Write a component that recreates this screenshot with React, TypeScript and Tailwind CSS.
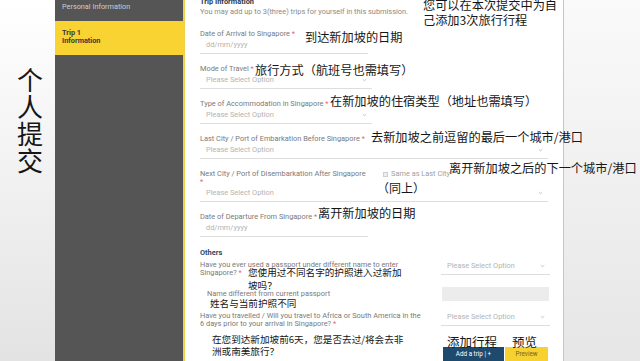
import React from "react";

function Chevron() {
  return (
    <svg width="5" height="4" viewBox="0 0 5 4" className="shrink-0">
      <path d="M0.8 1.2 L2.5 2.8 L4.2 1.2" fill="none" stroke="#b5b5b5" strokeWidth="0.8" />
    </svg>
  );
}

type FieldProps = {
  label: React.ReactNode;
  value: string;
  width: string;
  arrow?: boolean;
  className?: string;
};

function Field({ label, value, width, arrow, className }: FieldProps) {
  return (
    <div className={className}>
      <div className="whitespace-nowrap text-[7.4px] leading-[8px] text-[#7a7a7a]">{label}</div>
      <Picker value={value} width={width} arrow={arrow} />
    </div>
  );
}

function Picker({ value, width, arrow, className }: { value: string; width: string; arrow?: boolean; className?: string }) {
  return (
    <div
      className={`flex items-center justify-between border-b border-[#dedede] pb-[4px] pl-[6px] pr-[5px] pt-[3px] text-[7.4px] leading-[8px] text-[#b3b3b3] ${width} ${className ?? ""}`}
    >
      <span>{value}</span>
      {arrow && <Chevron />}
    </div>
  );
}

const Star = () => <span className="text-[#e0676b]">*</span>;

export default function App() {
  return (
    <div className="relative flex h-[361px] w-[640px] overflow-hidden bg-white font-['Roboto','Liberation_Sans',sans-serif]">
      {/* slide strip with vertical title */}
      <div className="w-[55px] shrink-0 bg-gradient-to-b from-white to-[#e3e3e3] pl-[17px] pt-[65px]">
        <div className="flex flex-col font-['Noto_Sans_CJK_SC',sans-serif] text-[26px] leading-[27px] text-[#161616]">
          <span>个</span>
          <span>人</span>
          <span>提</span>
          <span>交</span>
        </div>
      </div>

      {/* steps sidebar */}
      <aside className="w-[130px] shrink-0 border-r-2 border-[#eed349] bg-[#555555]">
        <div className="h-[20px] whitespace-nowrap pl-[7px] pt-[3px] text-[7.3px] leading-[8px] text-[#cdcdcd]">Personal Information</div>
        <div className="mt-[1px] h-[34px] bg-[#f8d331] pl-[7px] pt-[8px] text-[7.3px] font-bold leading-[8px] text-[#3a3a3a]">
          Trip 1
          <br />
          Information
        </div>
      </aside>

      {/* form */}
      <main className="w-[378px] shrink-0 pl-[15px]">
        <div className="-mt-[2px] text-[7.4px] font-bold leading-[8px] text-[#2f3b48]">Trip Information</div>
        <div className="mt-[2px] whitespace-nowrap text-[7.4px] leading-[8px] text-[#8a8a8a]">
          You may add up to 3(three) trips for yourself in this submission.
        </div>

        <Field
          className="mt-[14px]"
          label={<>Date of Arrival to Singapore <Star /></>}
          value="dd/mm/yyyy"
          width="w-[168px]"
        />
        <Field
          className="mt-[11px]"
          label={<>Mode of Travel <Star /></>}
          value="Please Select Option"
          width="w-[172px]"
          arrow
        />
        <Field
          className="mt-[11px]"
          label={<>Type of Accommodation in Singapore <Star /></>}
          value="Please Select Option"
          width="w-[172px]"
          arrow
        />
        <Field
          className="mt-[11px]"
          label={<>Last City / Port of Embarkation Before Singapore <Star /></>}
          value="Please Select Option"
          width="w-[348px]"
          arrow
        />

        <div className="mt-[11px]">
          <div className="flex items-start">
            <div className="w-[183px] whitespace-nowrap text-[7.4px] leading-[8px] text-[#7a7a7a]">
              Next City / Port of Disembarkation After Singapore
              <br />
              <Star />
            </div>
            <div className="flex items-center gap-[3px] whitespace-nowrap text-[7.4px] leading-[8px] text-[#a0a0a0]">
              <span className="h-[5px] w-[5px] border border-[#cfcfcf] bg-[#eeeeee]" />
              Same as Last City
            </div>
          </div>
          <Picker value="Please Select Option" width="w-[348px]" arrow />
        </div>

        <Field
          className="mt-[11px]"
          label={<>Date of Departure From Singapore <Star /></>}
          value="dd/mm/yyyy"
          width="w-[168px]"
        />

        <div className="mt-[12px] text-[7.4px] font-bold leading-[8px] text-[#2d4866]">Others</div>

        <div className="mt-[4px] flex items-start">
          <div className="w-[241px] whitespace-nowrap text-[7.4px] leading-[8px] text-[#7a7a7a]">
            Have you ever used a passport under different name to enter
            <br />
            Singapore? <Star />
          </div>
          <Picker className="-mt-[2px]" value="Please Select Option" width="w-[109px]" arrow />
        </div>

        <div className="mt-[10px] flex items-center">
          <div className="w-[242px] whitespace-nowrap pl-[7px] text-[7.4px] leading-[8px] text-[#7a7a7a]">Name different from current passport</div>
          <div className="h-[14px] w-[107px] bg-[#ececec]" />
        </div>

        <div className="mt-[11px] flex items-start">
          <div className="w-[241px] whitespace-nowrap text-[7.4px] leading-[8px] text-[#7a7a7a]">
            Have you travelled / Will you travel to Africa or South America in the
            <br />
            6 days prior to your arrival in Singapore? <Star />
          </div>
          <Picker className="-mt-[2px]" value="Please Select Option" width="w-[109px]" arrow />
        </div>

        <div className="ml-[243px] mt-[19px] flex gap-[1px] text-[6.3px]">
          <div className="flex h-[16px] w-[61px] items-start justify-center whitespace-nowrap bg-[#1e4b6d] pt-[3px] text-white">Add a trip | +</div>
          <div className="flex h-[16px] w-[43px] items-start justify-center bg-[#f6d12f] pt-[3px] text-[#6f6130]">Preview</div>
        </div>
      </main>

      <div className="flex-1 border-l border-[#c6c6c6] bg-gradient-to-b from-[#fafafa] to-[#e6e6e6]" />

      {/* annotations laid over the form */}
      <div className="pointer-events-none absolute inset-0 font-['Noto_Sans_CJK_SC',sans-serif] text-[#161616]">
        <div className="absolute left-[423px] top-[-2px] whitespace-nowrap text-[12.2px] leading-[15px]">
          您可以在本次提交中为自
          <br />
          己添加3次旅行行程
        </div>
        <div className="absolute left-[305px] top-[30px] whitespace-nowrap text-[12.2px] leading-[15px]">到达新加坡的日期</div>
        <div className="absolute left-[255px] top-[63px] whitespace-nowrap text-[12.2px] leading-[15px]">旅行方式（航班号也需填写）</div>
        <div className="absolute left-[330px] top-[94px] whitespace-nowrap text-[12.2px] leading-[15px]">在新加坡的住宿类型（地址也需填写）</div>
        <div className="absolute left-[371px] top-[130px] whitespace-nowrap text-[12.2px] leading-[15px]">去新加坡之前逗留的最后一个城市/港口</div>
        <div className="absolute left-[449px] top-[161px] whitespace-nowrap text-[12.2px] leading-[15px]">离开新加坡之后的下一个城市/港口</div>
        <div className="absolute left-[377px] top-[180px] whitespace-nowrap text-[12px] leading-[15px]">（同上）</div>
        <div className="absolute left-[318px] top-[206px] whitespace-nowrap text-[12.2px] leading-[15px]">离开新加坡的日期</div>
        <div className="absolute left-[248px] top-[266px] whitespace-nowrap text-[9.6px] leading-[13px]">
          您使用过不同名字的护照进入过新加
          <br />
          坡吗？
        </div>
        <div className="absolute left-[210px] top-[297px] whitespace-nowrap text-[9.6px] leading-[13px]">姓名与当前护照不同</div>
        <div className="absolute left-[212px] top-[333px] whitespace-nowrap text-[9.6px] leading-[12px]">
          在您到达新加坡前6天，您是否去过/将会去非
          <br />
          洲或南美旅行？
        </div>
        <div className="absolute left-[447px] top-[334px] whitespace-nowrap text-[12.5px] leading-[15px]">添加行程</div>
        <div className="absolute left-[512px] top-[334px] whitespace-nowrap text-[12.5px] leading-[15px]">预览</div>
      </div>
    </div>
  );
}
